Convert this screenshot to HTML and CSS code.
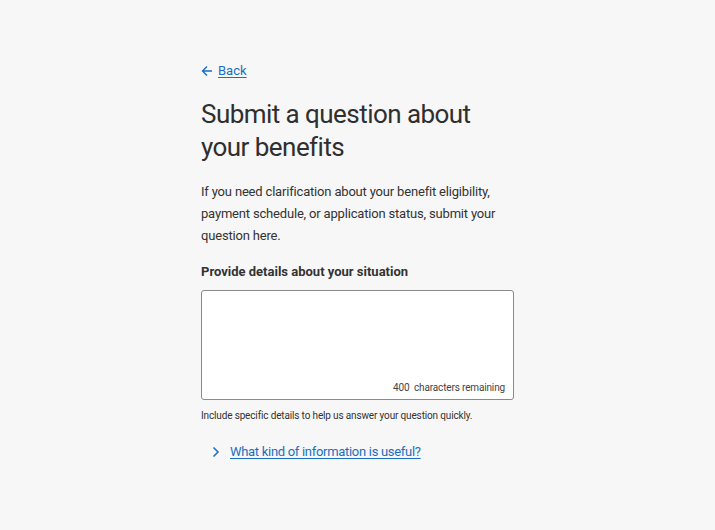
FILE: index.html
```html
<!DOCTYPE html>
<html lang="en">
<head>
<meta charset="utf-8">
<link rel="stylesheet" href="styles.css">
</head>
<body>
<main class="page">
  <a class="back" href="#">
    <svg class="back-icon" width="12" height="12" viewBox="0 0 12 12" aria-hidden="true"><path d="M11 6H1.5M6 1.5L1.5 6L6 10.5" fill="none" stroke="currentColor" stroke-width="1.4"/></svg>
    <span class="back-text">Back</span>
  </a>
  <h1 class="title">Submit a question about your benefits</h1>
  <p class="intro">If you need clarification about your benefit eligibility, payment schedule, or application status, submit your question here.</p>
  <label class="label" for="details">Provide details about your situation</label>
  <div class="field">
    <textarea id="details" class="textarea"></textarea>
    <span class="counter">400&nbsp; characters remaining</span>
  </div>
  <p class="hint">Include specific details to help us answer your question quickly.</p>
  <a class="disclosure" href="#">
    <svg class="chev" width="10" height="12" viewBox="0 0 10 12" aria-hidden="true"><path d="M2.5 1.5L7 6L2.5 10.5" fill="none" stroke="currentColor" stroke-width="1.5"/></svg>
    <span class="disclosure-text">What kind of information is useful?</span>
  </a>
</main>
</body>
</html>
```

FILE: styles.css
```css
html, body {
  margin: 0;
  padding: 0;
  background: #f7f7f7;
}
body {
  font-family: Roboto, "Liberation Sans", sans-serif;
  color: #333;
}
.page {
  width: 314px;
  margin-left: 201px;
  padding-top: 62px;
  display: flex;
  flex-direction: column;
  align-items: flex-start;
}
.back {
  display: flex;
  align-items: center;
  gap: 5px;
  color: #1a6fc2;
  text-decoration: none;
  font-size: 13px;
  line-height: 18px;
}
.back-icon { display: block; }
.back-text {
  text-decoration: underline;
  text-underline-offset: 2px;
}
.title {
  margin: 18px 0 0;
  font-size: 26px;
  line-height: 33px;
  font-weight: 400;
  letter-spacing: -0.55px;
  color: #2f2f2f;
  width: 290px;
}
.intro {
  margin: 17px 0 0;
  font-size: 13px;
  line-height: 22px;
  letter-spacing: -0.18px;
  color: #333;
  width: 300px;
}
.label {
  margin-top: 16px;
  font-size: 13px;
  line-height: 18px;
  font-weight: 700;
  color: #333;
}
.field {
  position: relative;
  margin-top: 9px;
  width: 313px;
  height: 110px;
}
.textarea {
  box-sizing: border-box;
  width: 100%;
  height: 100%;
  border: 1px solid #8a8a8a;
  border-radius: 3px;
  background: #fff;
  resize: none;
  display: block;
  margin: 0;
}
.counter {
  position: absolute;
  right: 9px;
  bottom: 6px;
  font-size: 10px;
  line-height: 12px;
  letter-spacing: -0.15px;
  color: #444;
}
.hint {
  margin: 9px 0 0;
  font-size: 10px;
  line-height: 13px;
  letter-spacing: -0.15px;
  color: #333;
}
.disclosure {
  margin-top: 21px;
  margin-left: 10px;
  display: flex;
  align-items: center;
  gap: 9px;
  color: #1a6fc2;
  text-decoration: none;
  font-size: 13px;
  line-height: 18px;
}
.chev { display: block; }
.disclosure-text {
  text-decoration: underline;
  text-underline-offset: 2px;
  letter-spacing: -0.3px;
}
```
